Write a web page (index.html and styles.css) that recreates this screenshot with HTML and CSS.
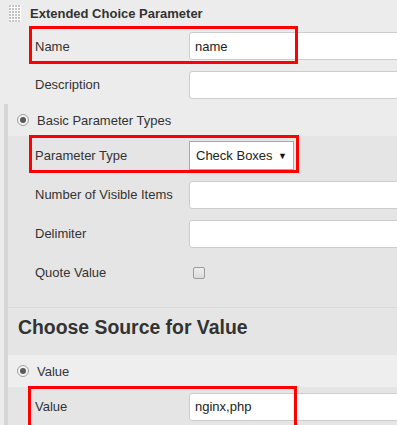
FILE: index.html
```html
<!DOCTYPE html>
<html lang="en">
<head>
    <meta charset="UTF-8">
    <title>Extended Choice Parameter</title>
    <link rel="stylesheet" href="styles.css">
</head>
<body>
    <div class="block-header">
        <svg class="handle" width="12" height="17" viewBox="0 0 12 17">
            <rect width="12" height="17" fill="#ffffff"/>
            <g fill="#c4c4c4">
                <rect x="0" y="0" width="2" height="2"/><rect x="3" y="0" width="2" height="2"/><rect x="6" y="0" width="2" height="2"/><rect x="9" y="0" width="2" height="2"/>
                <rect x="0" y="3" width="2" height="2"/><rect x="3" y="3" width="2" height="2"/><rect x="6" y="3" width="2" height="2"/><rect x="9" y="3" width="2" height="2"/>
                <rect x="0" y="6" width="2" height="2"/><rect x="3" y="6" width="2" height="2"/><rect x="6" y="6" width="2" height="2"/><rect x="9" y="6" width="2" height="2"/>
                <rect x="0" y="9" width="2" height="2"/><rect x="3" y="9" width="2" height="2"/><rect x="6" y="9" width="2" height="2"/><rect x="9" y="9" width="2" height="2"/>
                <rect x="0" y="12" width="2" height="2"/><rect x="3" y="12" width="2" height="2"/><rect x="6" y="12" width="2" height="2"/><rect x="9" y="12" width="2" height="2"/>
                <rect x="0" y="15" width="2" height="2"/><rect x="3" y="15" width="2" height="2"/><rect x="6" y="15" width="2" height="2"/><rect x="9" y="15" width="2" height="2"/>
            </g>
        </svg>
        <span class="block-title">Extended Choice Parameter</span>
    </div>

    <div class="row first">
        <span class="label">Name</span>
        <input class="text-input" type="text" value="name">
        <div class="mark"></div>
    </div>
    <div class="row">
        <span class="label">Description</span>
        <input class="text-input" type="text">
    </div>

    <div class="nested">
        <div class="radio-row">
            <span class="radio"></span>
            <span>Basic Parameter Types</span>
        </div>
        <div class="inner">
            <div class="row">
                <span class="label">Parameter Type</span>
                <div class="select">
                    <span>Check Boxes</span>
                    <span class="arrow">▼</span>
                </div>
                <div class="mark"></div>
            </div>
            <div class="row">
                <span class="label">Number of Visible Items</span>
                <input class="text-input" type="text">
            </div>
            <div class="row">
                <span class="label">Delimiter</span>
                <input class="text-input" type="text">
            </div>
            <div class="row">
                <span class="label">Quote Value</span>
                <span class="checkbox"></span>
            </div>
        </div>

        <div class="section-header">Choose Source for Value</div>

        <div class="radio-row band">
            <span class="radio"></span>
            <span>Value</span>
        </div>
        <div class="inner last">
            <div class="row">
                <span class="label">Value</span>
                <input class="text-input" type="text" value="nginx,php">
                <div class="mark open"></div>
            </div>
        </div>
    </div>
</body>
</html>
```

FILE: styles.css
```css
* {
    margin: 0;
    padding: 0;
    box-sizing: border-box;
}

html, body {
    overflow: hidden;
}

body {
    font-family: 'Liberation Sans', Arial, sans-serif;
    font-size: 13px;
    color: #333;
    background: #ececec;
    width: 397px;
    height: 425px;
}

.block-header {
    display: flex;
    align-items: center;
    height: 26px;
    padding-left: 9px;
    gap: 9px;
}

.handle {
    display: block;
    margin-top: 1px;
}

.block-title {
    font-weight: bold;
    color: #333;
}

.row {
    position: relative;
    display: flex;
    align-items: center;
    height: 39px;
    padding-left: 35px;
}

.row.first {
    padding-top: 1px;
}

.label {
    width: 154px;
    flex-shrink: 0;
}

.text-input {
    width: 300px;
    height: 28px;
    flex-shrink: 0;
    border: 1px solid #cccccc;
    border-radius: 3px;
    background: #fff;
    padding-left: 5px;
    font-family: 'Liberation Sans', Arial, sans-serif;
    font-size: 13px;
    color: #222;
    outline: none;
}

.mark {
    position: absolute;
    left: 29px;
    top: 0;
    width: 269px;
    height: 38px;
    border: 3px solid #ff0000;
}

.nested {
    margin-left: 4px;
    border-left: 4px solid #d6d6d6;
}

.nested .row {
    padding-left: 27px;
}

.nested .mark {
    left: 21px;
    top: -1px;
    width: 270px;
}

.nested .mark.open {
    height: 60px;
    width: 269px;
    left: 20px;
}

.radio-row {
    display: flex;
    align-items: center;
    gap: 8px;
    height: 32px;
    padding-left: 9px;
    background: #ececec;
}

.radio-row.band {
    height: 32px;
    background: #eeeeee;
}

.radio {
    position: relative;
    width: 12px;
    height: 12px;
    border: 1px solid #a0a0a0;
    border-radius: 50%;
    background: #f2f2f2;
}

.radio::after {
    content: "";
    position: absolute;
    left: 2px;
    top: 2px;
    width: 6px;
    height: 6px;
    border-radius: 50%;
    background: #5a5a5a;
}

.inner {
    background: #e5e5e5;
    padding-bottom: 15px;
}

.inner.last {
    padding-bottom: 0;
    height: 40px;
}

.select {
    display: flex;
    align-items: center;
    justify-content: space-between;
    width: 105px;
    height: 29px;
    padding: 0 6px;
    border: 1px solid #a9a9a9;
    background: #fff;
    color: #222;
}

.arrow {
    font-size: 9px;
    color: #111;
}

.checkbox {
    display: block;
    width: 12px;
    height: 12px;
    margin-left: 4px;
    border: 1px solid #9c9c9c;
    border-radius: 2px;
    background: linear-gradient(#eeeeee, #dcdcdc);
}

.section-header {
    background: #e5e5e5;
    border-top: 1px solid #d8d8d8;
    height: 48px;
    padding: 8px 0 0 10px;
    font-size: 19.4px;
    font-weight: bold;
    color: #333;
}
```
